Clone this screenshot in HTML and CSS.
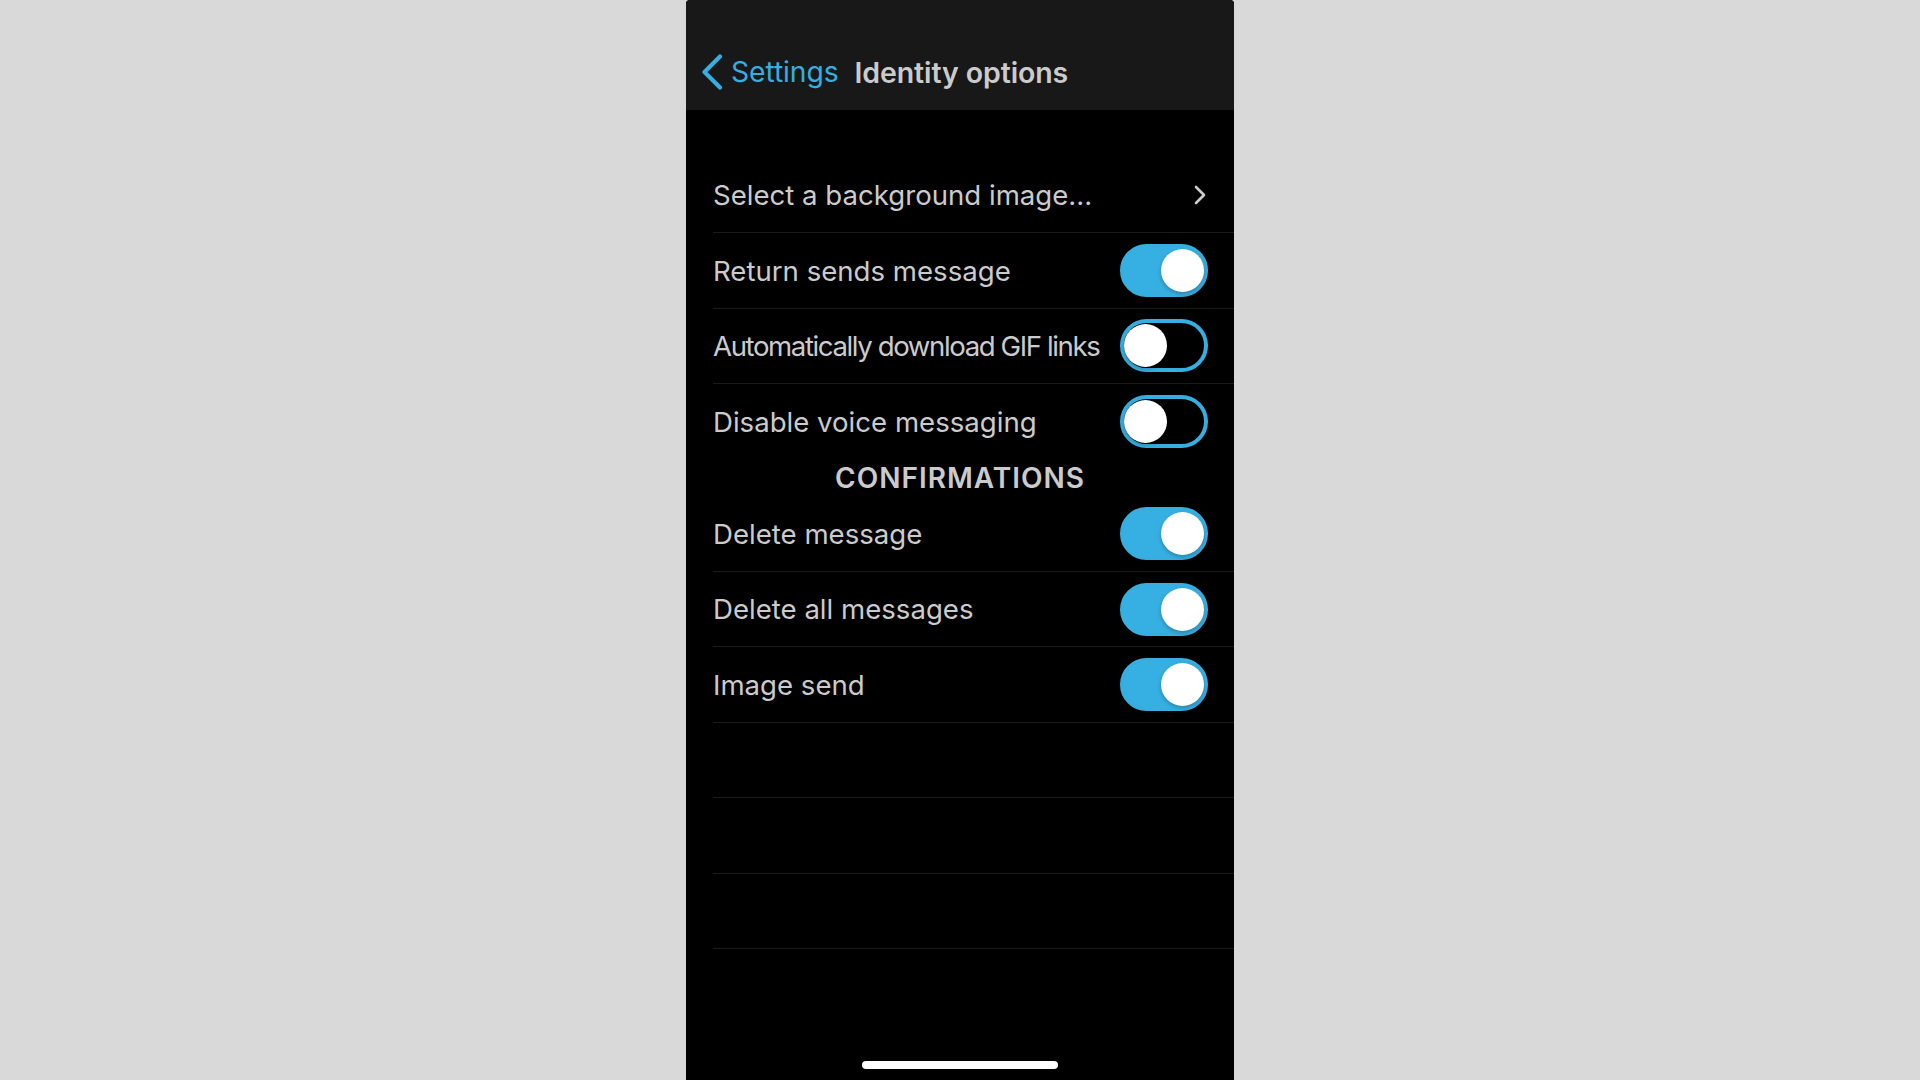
FILE: index.html
```html
<!DOCTYPE html>
<html lang="en">
<head>
<meta charset="utf-8">
<title>Identity options</title>
<link rel="stylesheet" href="styles.css">
</head>
<body>
<div class="phone">
  <header class="navbar">
    <div class="back">
      <svg class="back-chevron" width="22" height="36" viewBox="0 0 22 36"><path d="M19 2.5 L3.5 18 L19 33.5" fill="none" stroke="#36aee0" stroke-width="4.2" stroke-linecap="round" stroke-linejoin="round"/></svg>
      <span class="back-label">Settings</span>
    </div>
    <h1 class="title">Identity options</h1>
  </header>
  <main class="content">
    <div class="list">
      <div class="row">
        <span class="label">Select a background image...</span>
        <svg class="disclosure" width="14" height="20" viewBox="0 0 14 20"><path d="M3 2 L11 10 L3 18" fill="none" stroke="#cbcbcb" stroke-width="2.6" stroke-linecap="round" stroke-linejoin="round"/></svg>
      </div>
      <div class="row">
        <span class="label">Return sends message</span>
        <span class="toggle on"><span class="knob"></span></span>
      </div>
      <div class="row">
        <span class="label label-tight">Automatically download GIF links</span>
        <span class="toggle off"><span class="knob"></span></span>
      </div>
      <div class="row last">
        <span class="label">Disable voice messaging</span>
        <span class="toggle off"><span class="knob"></span></span>
      </div>
    </div>
    <h2 class="section">CONFIRMATIONS</h2>
    <div class="list">
      <div class="row">
        <span class="label">Delete message</span>
        <span class="toggle on"><span class="knob"></span></span>
      </div>
      <div class="row">
        <span class="label">Delete all messages</span>
        <span class="toggle on"><span class="knob"></span></span>
      </div>
      <div class="row">
        <span class="label">Image send</span>
        <span class="toggle on"><span class="knob"></span></span>
      </div>
      <div class="row"></div>
      <div class="row"></div>
      <div class="row"></div>
    </div>
  </main>
  <div class="home-indicator"></div>
</div>
</body>
</html>
```

FILE: styles.css
```css
* { box-sizing: border-box; }

html, body {
  margin: 0;
  padding: 0;
  height: 100%;
}

body {
  background: #d9d9d9;
  display: flex;
  justify-content: center;
  font-family: Inter, "Liberation Sans", sans-serif;
  overflow: hidden;
}

.phone {
  width: 548px;
  height: 1080px;
  background: #000;
  display: flex;
  flex-direction: column;
  position: relative;
  border-top-left-radius: 4px;
  border-top-right-radius: 4px;
}

.navbar {
  height: 110px;
  background: #181818;
  display: flex;
  align-items: center;
  padding: 34px 0 0 15px;
  border-top-left-radius: 4px;
  border-top-right-radius: 4px;
}

.back {
  display: flex;
  align-items: center;
  gap: 8px;
}

.back-chevron {
  display: block;
  margin-top: -1px;
}

.back-label {
  color: #36aee0;
  font-size: 28.3px;
  letter-spacing: -0.1px;
}

.title {
  margin: 0 0 0 16px;
  color: #cbcbcb;
  font-size: 28.5px;
  font-weight: 600;
  letter-spacing: -0.1px;
}

.content {
  padding-top: 48px;
  flex: 1;
}

.list {
  margin-left: 27px;
}

.row {
  height: 75.4px;
  display: flex;
  align-items: center;
  justify-content: space-between;
  gap: 10px;
  padding-right: 26px;
  border-bottom: 1.5px solid #1a1a1a;
}

.row.last {
  border-bottom: none;
}

.label {
  color: #cbcbcb;
  font-size: 27.6px;
  white-space: nowrap;
  min-width: 0;
}

.label-tight {
  letter-spacing: -1.4px;
}

.disclosure {
  display: block;
  margin-right: 1px;
  flex: none;
}

.section {
  margin: 0;
  height: 37px;
  text-align: center;
  color: #cbcbcb;
  font-size: 28px;
  font-weight: 600;
  line-height: 37px;
  letter-spacing: 1px;
}

.toggle {
  width: 88px;
  height: 53px;
  border-radius: 27px;
  position: relative;
  flex: none;
  border: 3px solid #36aee0;
}

.toggle.on {
  background: #36b0e2;
}

.toggle.off {
  background: #000;
  border-width: 4px;
}

.knob {
  position: absolute;
  top: 2px;
  width: 43px;
  height: 43px;
  border-radius: 50%;
  background: #fff;
  box-shadow: 0 2px 4px rgba(0, 0, 0, 0.25);
}

.toggle.on .knob {
  right: 1px;
}

.toggle.off .knob {
  left: 0;
  top: 1px;
}

.home-indicator {
  position: absolute;
  left: 176px;
  bottom: 11px;
  width: 196px;
  height: 8px;
  border-radius: 4px;
  background: #fff;
}
```
